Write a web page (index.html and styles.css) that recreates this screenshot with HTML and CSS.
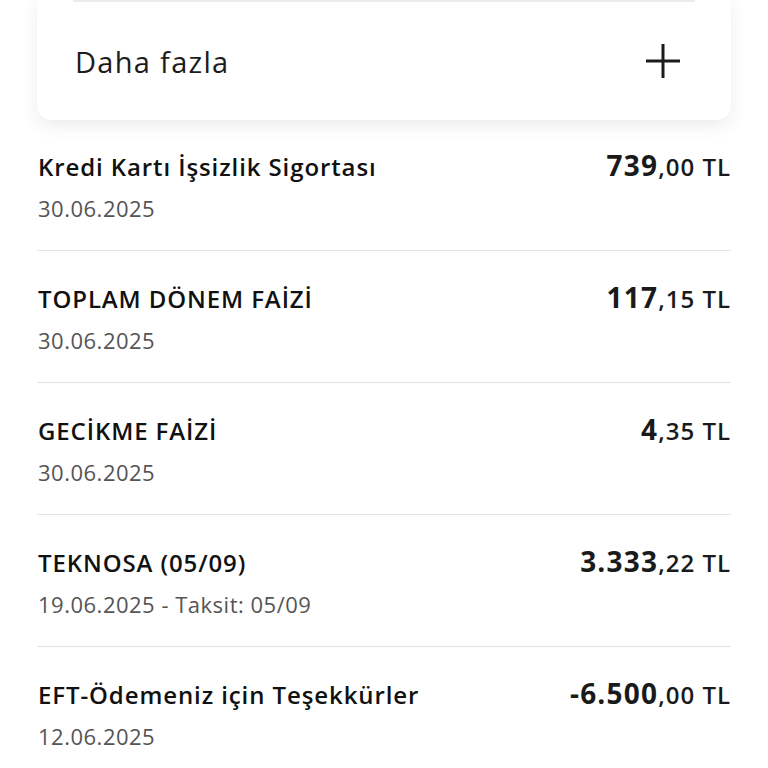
FILE: index.html
```html
<!DOCTYPE html>
<html lang="tr">
  <head>
    <meta charset="utf-8" />
    <title>Hesap Hareketleri</title>
    <meta name="viewport" content="width=device-width, initial-scale=1.0" />
    <link rel="stylesheet" href="styles.css">
  </head>
  <body>
    <div class="page">
      <!-- Filter card, scrolled partly off the top -->
      <div class="card">
        <div class="more-row">
          <span class="more-label">Daha fazla</span>
          <svg class="plus" width="36" height="36" viewBox="0 0 36 36">
            <path d="M18 1 V35 M1 18 H35" stroke="#1c1c1c" stroke-width="3" fill="none" />
          </svg>
        </div>
      </div>

      <ul class="tx-list">
        <li class="tx">
          <div class="tx-info">
            <div class="tx-title">Kredi Kartı İşsizlik Sigortası</div>
            <div class="tx-date">30.06.2025</div>
          </div>
          <div class="tx-amount"><b>739</b>,00 TL</div>
        </li>
        <li class="tx">
          <div class="tx-info">
            <div class="tx-title">TOPLAM DÖNEM FAİZİ</div>
            <div class="tx-date">30.06.2025</div>
          </div>
          <div class="tx-amount"><b>117</b>,15 TL</div>
        </li>
        <li class="tx">
          <div class="tx-info">
            <div class="tx-title">GECİKME FAİZİ</div>
            <div class="tx-date">30.06.2025</div>
          </div>
          <div class="tx-amount"><b>4</b>,35 TL</div>
        </li>
        <li class="tx">
          <div class="tx-info">
            <div class="tx-title">TEKNOSA (05/09)</div>
            <div class="tx-date">19.06.2025 - Taksit: 05/09</div>
          </div>
          <div class="tx-amount"><b>3.333</b>,22 TL</div>
        </li>
        <li class="tx">
          <div class="tx-info">
            <div class="tx-title">EFT-Ödemeniz için Teşekkürler</div>
            <div class="tx-date">12.06.2025</div>
          </div>
          <div class="tx-amount"><b>-6.500</b>,00 TL</div>
        </li>
      </ul>
    </div>
  </body>
</html>
```

FILE: styles.css
```css
/* Base styles */
body {
  margin: 0;
  padding: 0;
  background: #fff;
  color: #111;
  font-family: "Open Sans", "Noto Sans", sans-serif;
}

.page {
  padding: 0 37px;
}

/* Card */
.card {
  background: #fff;
  border-radius: 0 0 14px 14px;
  box-shadow: 0 6px 18px rgba(0, 0, 0, 0.08);
  padding: 0 36px;
}

.more-row {
  height: 120px;
  border-top: 2px solid #ececec;
  box-sizing: border-box;
  display: flex;
  align-items: center;
  justify-content: space-between;
}

.more-label {
  font-size: 29px;
  font-weight: 500;
  letter-spacing: 1.3px;
  color: #1c1c1c;
  margin-left: 2px;
}

.plus {
  margin-right: 14px;
}

/* Transactions */
.tx-list {
  list-style: none;
  margin: 0;
  padding: 0;
}

.tx {
  display: flex;
  justify-content: space-between;
  align-items: baseline;
  padding: 31px 0 28px 1px;
  border-bottom: 1px solid #e3e3e3;
}

.tx:first-child {
  padding-top: 30px;
}

.tx:last-child {
  border-bottom: none;
}

.tx-title {
  font-size: 24px;
  line-height: 30px;
  font-weight: 600;
  letter-spacing: 0.9px;
  color: #111;
}

.tx-date {
  margin-top: 12px;
  font-size: 22px;
  line-height: 28px;
  letter-spacing: 0.5px;
  color: #555;
}

.tx-amount {
  font-size: 24px;
  line-height: 30px;
  letter-spacing: 1px;
  color: #1a1a1a;
  font-weight: 600;
}

.tx-amount b {
  font-size: 28px;
  font-weight: 700;
  letter-spacing: 1.2px;
}
```
